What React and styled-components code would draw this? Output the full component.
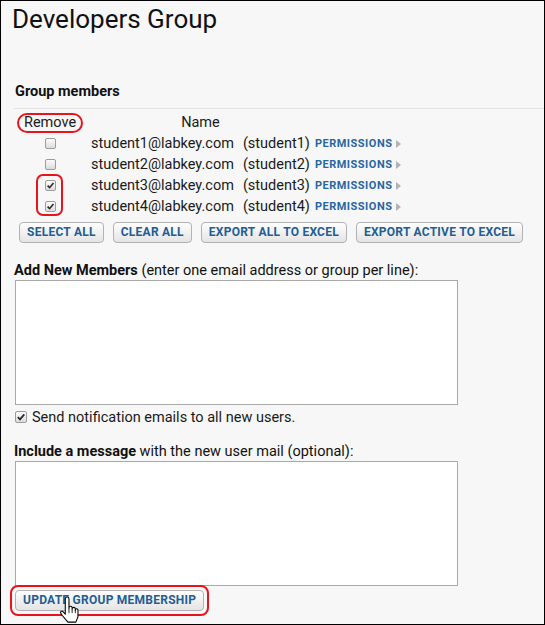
import React from 'react';
import styled, { createGlobalStyle } from 'styled-components';

const Global = createGlobalStyle`
  html, body { margin: 0; padding: 0; background: #fff; }
  body { font-family: Roboto, "Liberation Sans", Arial, sans-serif; color: #1a1a1a; }
`;

const Frame = styled.div`
  position: relative;
  width: 545px;
  height: 625px;
  box-sizing: border-box;
  border: 1px solid #000;
  background: #f7f7f7;
  padding-left: 13px;
  overflow: hidden;
  display: flex;
  flex-direction: column;
  align-items: flex-start;
`;

const Title = styled.h1`
  margin: 3px 0 0 -2px;
  font-size: 26px;
  font-weight: 400;
  line-height: 30px;
  color: #111;
`;

const SectionHeading = styled.h2`
  align-self: stretch;
  margin: 48px 0 0 0;
  padding: 0 0 6px 1px;
  font-size: 14.5px;
  font-weight: 700;
  line-height: 20px;
  color: #111;
  border-bottom: 1px solid #e2e2e2;
`;

const MembersGrid = styled.div`
  position: relative;
  margin-top: 3px;
  display: grid;
  grid-template-columns: 77px max-content max-content max-content;
  grid-auto-rows: 21px;
  align-items: center;
  font-size: 14.5px;
`;

const RemoveCell = styled.div`
  display: flex;
  align-items: center;
`;

const RemoveMark = styled.span`
  margin-left: 3px;
  padding: 0 5px;
  border: 2px solid #e8141c;
  border-radius: 11px;
  line-height: 16px;
`;

const NameHeader = styled.div`
  grid-column: 2 / span 2;
  text-align: center;
`;

const CheckCell = styled.div`
  display: flex;
  align-items: center;
  padding-left: 31px;
`;

const Box = styled.span`
  display: inline-flex;
  align-items: center;
  justify-content: center;
  flex: none;
  width: ${(p) => p.$size}px;
  height: ${(p) => p.$size}px;
  box-sizing: border-box;
  border: 1px solid #9c9c9c;
  border-radius: 2px;
  background: linear-gradient(#fcfcfc, #dcdcdc);
`;

const Email = styled.div``;

const UserName = styled.div`
  padding-left: 9px;
`;

const PermCell = styled.div`
  display: flex;
  align-items: center;
  padding-left: 5px;
`;

const PermLink = styled.span`
  font-size: 11px;
  font-weight: 700;
  letter-spacing: 0.5px;
  color: #2766a2;
`;

const Arrow = styled.span`
  margin-left: 4px;
  width: 0;
  height: 0;
  border-top: 4px solid transparent;
  border-bottom: 4px solid transparent;
  border-left: 5px solid #b3b3b3;
`;

const CheckHighlight = styled.div`
  position: absolute;
  left: 22px;
  top: 62px;
  width: 27px;
  height: 42px;
  box-sizing: border-box;
  border: 2px solid #e8141c;
  border-radius: 7px;
  pointer-events: none;
`;

const ButtonBar = styled.div`
  display: flex;
  gap: 9px;
  margin: 5px 0 0 5px;
`;

const Button = styled.button`
  margin: 0;
  height: 21px;
  box-sizing: border-box;
  padding: 0 7px;
  border: 1px solid #b2b2b2;
  border-radius: 4px;
  background: linear-gradient(#fefefe, #e4e4e4);
  font-family: Roboto, "Liberation Sans", Arial, sans-serif;
  font-size: 12px;
  font-weight: 700;
  letter-spacing: 0.25px;
  color: #235d94;
  line-height: 19px;
  white-space: nowrap;
  cursor: pointer;
`;

const FieldLabel = styled.div`
  margin-top: ${(p) => p.$top}px;
  font-size: 14.5px;
  line-height: 18px;
  color: #111;
`;

const TextArea = styled.textarea`
  display: block;
  width: 443px;
  height: 125px;
  box-sizing: border-box;
  margin: 0 0 0 1px;
  border: 1px solid #a9a9a9;
  background: #fff;
  resize: none;
  font-family: inherit;
`;

const CheckRow = styled.label`
  display: flex;
  align-items: center;
  gap: 5px;
  height: 20px;
  margin: 2px 0 0 1px;
  font-size: 14.5px;
`;

const UpdateMark = styled.div`
  position: relative;
  margin: -1px 0 0 -4px;
  padding: 3px;
  border: 2px solid #e8141c;
  border-radius: 8px;
  display: flex;
`;

const Cursor = styled.svg`
  position: absolute;
  left: 48px;
  top: 9px;
  pointer-events: none;
`;

function Check({ checked, size = 11 }) {
  return (
    <Box $size={size}>
      {checked && (
        <svg width={size - 2} height={size - 2} viewBox="0 0 10 10">
          <path d="M1.8 5.2 L4 7.4 L8.3 2.3" fill="none" stroke="#2b2b2b" strokeWidth="1.8" />
        </svg>
      )}
    </Box>
  );
}

const members = [
  { email: 'student1@labkey.com', user: 'student1', checked: false },
  { email: 'student2@labkey.com', user: 'student2', checked: false },
  { email: 'student3@labkey.com', user: 'student3', checked: true },
  { email: 'student4@labkey.com', user: 'student4', checked: true },
];

export default function App() {
  return (
    <>
      <Global />
      <Frame>
        <Title>Developers Group</Title>
        <SectionHeading>Group members</SectionHeading>
        <MembersGrid>
          <RemoveCell>
            <RemoveMark>Remove</RemoveMark>
          </RemoveCell>
          <NameHeader>Name</NameHeader>
          <div />
          {members.map((m) => (
            <React.Fragment key={m.user}>
              <CheckCell>
                <Check checked={m.checked} />
              </CheckCell>
              <Email>{m.email}</Email>
              <UserName>({m.user})</UserName>
              <PermCell>
                <PermLink>PERMISSIONS</PermLink>
                <Arrow />
              </PermCell>
            </React.Fragment>
          ))}
          <CheckHighlight />
        </MembersGrid>
        <ButtonBar>
          <Button>SELECT ALL</Button>
          <Button>CLEAR ALL</Button>
          <Button>EXPORT ALL TO EXCEL</Button>
          <Button>EXPORT ACTIVE TO EXCEL</Button>
        </ButtonBar>
        <FieldLabel $top={19}>
          <b>Add New Members</b> (enter one email address or group per line):
        </FieldLabel>
        <TextArea />
        <CheckRow>
          <Check checked size={12} />
          Send notification emails to all new users.
        </CheckRow>
        <FieldLabel $top={16}>
          <b>Include a message</b> with the new user mail (optional):
        </FieldLabel>
        <TextArea />
        <UpdateMark>
          <Button>UPDATE GROUP MEMBERSHIP</Button>
          <Cursor width="19" height="28" viewBox="0 0 18 26">
            <path
              d="M5 2.5 a1.75 1.75 0 0 1 3.5 0 V11 a1.5 1.5 0 0 1 3 0 V12 a1.5 1.5 0 0 1 3 0 V13 a1.25 1.25 0 0 1 2.5 0 V19.5 L15 24.5 H7.5 L2 18 L0.8 16 a1.2 1.2 0 0 1 2 -1.4 L5 17 Z"
              fill="#fff"
              stroke="#000"
              strokeWidth="1"
              strokeLinejoin="round"
            />
            <path d="M8.5 11 V16 M11.5 12 V16 M14.5 13 V16" stroke="#000" strokeWidth="0.8" fill="none" />
          </Cursor>
        </UpdateMark>
      </Frame>
    </>
  );
}
